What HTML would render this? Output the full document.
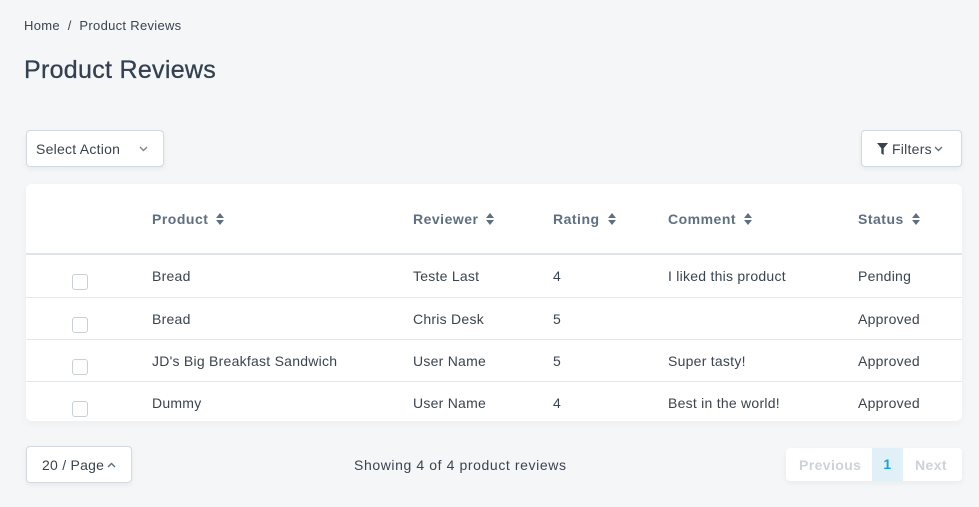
<!DOCTYPE html>
<html><head><style>
*{box-sizing:border-box;margin:0;padding:0}
body{width:979px;height:507px;background:#f4f6f8;font-family:"Liberation Sans",sans-serif;color:#3a4450;position:relative;overflow:hidden;font-size:14px;letter-spacing:0.25px}
.abs{position:absolute}
.crumb{left:24px;top:18px;font-size:13px;color:#3a4450;letter-spacing:0.3px}
h1{position:absolute;left:24px;top:56px;font-size:25px;font-weight:normal;color:#344050;letter-spacing:0.3px;-webkit-text-stroke:0.3px #344050}
.btn{position:absolute;background:#fff;border:1px solid #d3d9e0;border-radius:4px;box-shadow:0 2px 6px rgba(0,0,0,.06);font-size:14px;color:#3a4450;display:flex;align-items:center}
.card{position:absolute;left:26px;top:184px;width:936px;height:237px;background:#fff;border-radius:6px;box-shadow:0 2px 8px rgba(0,0,0,.04)}
.th{position:absolute;top:211px;font-weight:bold;color:#5f6f82;font-size:14px;letter-spacing:0.5px}
.sort{display:inline-block;width:8px;height:12px;margin-left:8px;vertical-align:-1px}
.row{position:absolute;left:26px;width:936px;height:42px;border-top:1px solid #e3e7ec}
.c{position:absolute;top:13px;font-size:14px}
.cb{position:absolute;left:46px;top:19px;width:16px;height:16px;border:1px solid #c9d0d8;border-radius:3px;background:#fff}
</style></head><body>
<div class="abs crumb">Home &nbsp;/&nbsp; Product Reviews</div>
<h1>Product Reviews</h1>
<div class="btn" style="left:26px;top:130px;width:138px;height:37px;padding-left:9px">Select Action
<svg class="abs" style="left:112px;top:15px" width="9" height="6" viewBox="0 0 9 6"><path d="M1 1l3.5 3.5L8 1" fill="none" stroke="#7a8694" stroke-width="1.4"/></svg></div>
<div class="btn" style="left:861px;top:130px;width:101px;height:37px;padding-left:15px">
<svg width="11" height="12" viewBox="0 0 11 12"><path d="M0 0h11L6.7 5.2V12L4.3 10.5V5.2z" fill="#3a4450"/></svg><span style="margin-left:4px">Filters</span>
<svg style="margin-left:2px" width="9" height="6" viewBox="0 0 9 6"><path d="M1 1l3.5 3.5L8 1" fill="none" stroke="#5f6f82" stroke-width="1.4"/></svg></div>
<div class="card"></div>
<div style="position:absolute;left:26px;top:253px;width:936px;height:2px;background:#dfe3ea"></div>
<svg width="0" height="0" style="position:absolute"><defs><symbol id="s" viewBox="0 0 8 12"><path d="M4 0L8 5H0zM4 12L0 7h8z" fill="#5f6f82"/></symbol></defs></svg>
<div class="th" style="left:152px">Product<svg class="sort"><use href="#s"/></svg></div>
<div class="th" style="left:413px">Reviewer<svg class="sort"><use href="#s"/></svg></div>
<div class="th" style="left:553px">Rating<svg class="sort"><use href="#s"/></svg></div>
<div class="th" style="left:668px">Comment<svg class="sort"><use href="#s"/></svg></div>
<div class="th" style="left:858px">Status<svg class="sort"><use href="#s"/></svg></div>
<div class="row" style="top:255px;border-top:none"><div class="cb"></div><div class="c" style="left:126px">Bread</div><div class="c" style="left:387px">Teste Last</div><div class="c" style="left:527px">4</div><div class="c" style="left:642px">I liked this product</div><div class="c" style="left:832px">Pending</div></div>
<div class="row" style="top:297px"><div class="cb"></div><div class="c" style="left:126px">Bread</div><div class="c" style="left:387px">Chris Desk</div><div class="c" style="left:527px">5</div><div class="c" style="left:832px">Approved</div></div>
<div class="row" style="top:339px"><div class="cb"></div><div class="c" style="left:126px">JD's Big Breakfast Sandwich</div><div class="c" style="left:387px">User Name</div><div class="c" style="left:527px">5</div><div class="c" style="left:642px">Super tasty!</div><div class="c" style="left:832px">Approved</div></div>
<div class="row" style="top:381px;height:40px"><div class="cb"></div><div class="c" style="left:126px">Dummy</div><div class="c" style="left:387px">User Name</div><div class="c" style="left:527px">4</div><div class="c" style="left:642px">Best in the world!</div><div class="c" style="left:832px">Approved</div></div>
<div class="btn" style="left:26px;top:446px;width:106px;height:37px;padding-left:15px">20 / Page
<svg style="margin-left:3px" width="9" height="6" viewBox="0 0 9 6"><path d="M1 5l3.5-3.5L8 5" fill="none" stroke="#5f6f82" stroke-width="1.4"/></svg></div>
<div class="abs" style="left:354px;top:457px;font-size:14px;letter-spacing:0.6px">Showing 4 of 4 product reviews</div>
<div class="abs" style="left:786px;top:448px;width:176px;height:33px;background:#fff;border-radius:4px;box-shadow:0 2px 6px rgba(0,0,0,.05);font-weight:bold;font-size:14px;color:#ccd3db;letter-spacing:0.4px">
<div class="abs" style="left:13px;top:9px">Previous</div>
<div class="abs" style="left:86px;top:0;width:31px;height:33px;background:#e1f0f6;color:#1aa3d9;text-align:center;line-height:33px">1</div>
<div class="abs" style="left:129px;top:9px">Next</div></div>
</body></html>
